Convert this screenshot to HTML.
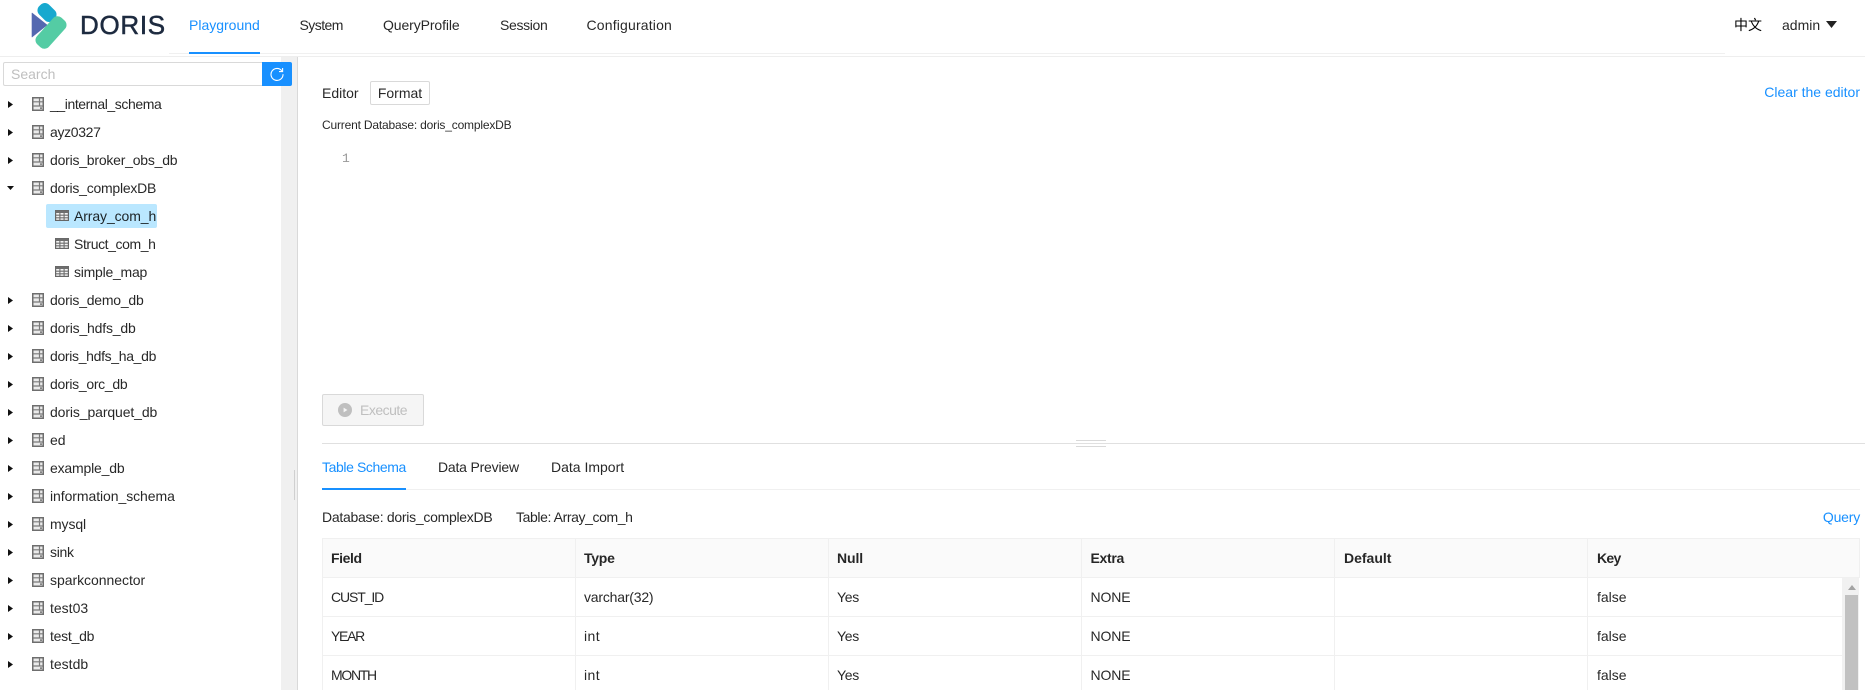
<!DOCTYPE html>
<html lang="en">
<head>
<meta charset="utf-8">
<title>Doris Playground</title>
<style>
html,body{margin:0;padding:0;background:#fff}
body{width:1865px;height:690px;overflow:hidden;position:relative;font-family:"Liberation Sans","Noto Sans CJK SC",sans-serif;font-size:14px;color:rgba(0,0,0,.85)}
.a{position:absolute;white-space:nowrap}
.t{position:absolute;white-space:nowrap;line-height:22px;height:22px}
.blue{color:#1890ff}
.row{position:absolute;left:0;width:281px;height:28px}
.row .car{position:absolute;left:8px;top:11px}
.row .ic{position:absolute;left:32px;top:7px}
.row .ti{position:absolute;left:55px;top:8px}
.row .lb{position:absolute;left:50px;top:3px;line-height:22px;white-space:nowrap;color:rgba(0,0,0,.85)}
.row.c .lb{left:74px}
.hd{position:absolute;top:539px;height:38px;line-height:38px;font-weight:700;color:rgba(0,0,0,.85);white-space:nowrap}
.hl{position:absolute;background:#f0f0f0}
</style>
</head>
<body>
<svg width="0" height="0" style="position:absolute">
  <symbol id="db" viewBox="0 0 12 14">
    <rect x=".75" y=".75" width="10.5" height="12.5" fill="#eaeaea" stroke="#6e6e6e" stroke-width="1.5"/>
    <path d="M1 4.8H11M1 9H11M7.5 1V9" stroke="#7a7a7a" stroke-width="1.2" fill="none"/>
    <rect x="8" y="10.5" width="2" height="1.2" fill="#555"/>
  </symbol>
  <symbol id="tb" viewBox="0 0 14 11">
    <rect x=".6" y=".6" width="12.8" height="9.8" fill="#f4f4f4" stroke="#666" stroke-width="1.2"/>
    <rect x=".6" y=".6" width="12.8" height="2.4" fill="#6e6e6e"/>
    <path d="M1 5.2H13M1 7.8H13M4.9 1V10M9.1 1V10" stroke="#6e6e6e" stroke-width="1.1" fill="none"/>
  </symbol>
  <symbol id="cr" viewBox="0 0 5 7"><path d="M0 0L5 3.5L0 7Z" fill="#111"/></symbol>
  <symbol id="cd" viewBox="0 0 7 4"><path d="M0 0H7L3.5 4Z" fill="#111"/></symbol>
</svg>

<!-- sidebar strip (below the search button) -->
<div class="a" style="left:281px;top:57px;width:16px;height:633px;background:#f0f0f0"></div>
<div class="a" style="left:297px;top:57px;width:1px;height:633px;background:#d9d9d9"></div>
<div class="a" style="left:294px;top:470px;width:1px;height:30px;background:#d0d0d0"></div>

<!-- header -->
<svg class="a" style="left:30px;top:0" width="40" height="52" viewBox="30 0 40 52">
  <rect x="37" y="5.5" width="20" height="14" rx="6" transform="rotate(45 47 12.5)" fill="#17a9cf"/>
  <path d="M32 13L47 25L32 37Z" fill="#5468b0" stroke="#5468b0" stroke-width="0.6" stroke-linejoin="round"/>
  <rect x="33" y="24.5" width="36" height="16" rx="6" transform="rotate(-48 51 32.5)" fill="#54cca4"/>
</svg>
<div class="a" style="left:80px;top:10px;font-size:26px;line-height:30px;color:#1d2a3f;letter-spacing:.7px;-webkit-text-stroke:.5px #1d2a3f">DORIS</div>

<div class="a" style="left:169px;top:53px;width:1556px;height:1px;background:#f0f0f0"></div>
<div class="a" style="left:0;top:56px;width:1865px;height:1px;background:#eee"></div>
<div class="a" style="left:189px;top:52px;width:71px;height:2px;background:#1890ff"></div>

<div class="t blue" style="left:189px;top:14px">Playground</div>
<div class="t" style="left:299.5px;top:14px;letter-spacing:-.55px">System</div>
<div class="t" style="left:383px;top:14px;letter-spacing:-.1px">QueryProfile</div>
<div class="t" style="left:500px;top:14px;letter-spacing:-.34px">Session</div>
<div class="t" style="left:586.5px;top:14px;letter-spacing:.17px">Configuration</div>
<div class="t" style="left:1734px;top:14px;color:#000">中文</div>
<div class="t" style="left:1782px;top:14px">admin</div>
<svg class="a" style="left:1826px;top:21px" width="11" height="7" viewBox="0 0 11 7"><path d="M0 0H11L5.5 7Z" fill="#222"/></svg>

<!-- search -->
<div class="a" style="left:3px;top:62px;width:259px;height:22px;border:1px solid #d9d9d9;border-right:0;border-radius:2px 0 0 2px;background:#fff;color:#bfbfbf;line-height:22px;text-indent:7px">Search</div>
<div class="a" style="left:262px;top:62px;width:30px;height:24px;background:#1890ff;border-radius:0 2px 2px 0"></div>
<svg class="a" style="left:270px;top:67px" width="14" height="14" viewBox="0 0 14 14"><path d="M11.8 3.8A6 6 0 1 0 13 7.2" fill="none" stroke="#fff" stroke-width="1.1"/><path d="M12.6 1V4.6H9" fill="none" stroke="#fff" stroke-width="1.1"/></svg>

<div class="row" style="top:90px"><svg class="car" width="5" height="7"><use href="#cr"/></svg><svg class="ic" width="12" height="14"><use href="#db"/></svg><span class="lb" style="letter-spacing:-.41px">__internal_schema</span></div>
<div class="row" style="top:118px"><svg class="car" width="5" height="7"><use href="#cr"/></svg><svg class="ic" width="12" height="14"><use href="#db"/></svg><span class="lb" style="letter-spacing:-.34px">ayz0327</span></div>
<div class="row" style="top:146px"><svg class="car" width="5" height="7"><use href="#cr"/></svg><svg class="ic" width="12" height="14"><use href="#db"/></svg><span class="lb" style="letter-spacing:-.22px">doris_broker_obs_db</span></div>
<div class="row" style="top:174px"><svg class="car" style="left:7px;top:12px" width="7" height="4"><use href="#cd"/></svg><svg class="ic" width="12" height="14"><use href="#db"/></svg><span class="lb" style="letter-spacing:-.24px">doris_complexDB</span></div>
<div class="a" style="left:46px;top:204px;width:111px;height:24px;background:#bae7ff;border-radius:2px"></div>
<div class="row c" style="top:202px"><svg class="ti" width="14" height="11"><use href="#tb"/></svg><span class="lb" style="letter-spacing:-.1px">Array_com_h</span></div>
<div class="row c" style="top:230px"><svg class="ti" width="14" height="11"><use href="#tb"/></svg><span class="lb" style="letter-spacing:-.4px">Struct_com_h</span></div>
<div class="row c" style="top:258px"><svg class="ti" width="14" height="11"><use href="#tb"/></svg><span class="lb" style="letter-spacing:-.24px">simple_map</span></div>
<div class="row" style="top:286px"><svg class="car" width="5" height="7"><use href="#cr"/></svg><svg class="ic" width="12" height="14"><use href="#db"/></svg><span class="lb" style="letter-spacing:-.23px">doris_demo_db</span></div>
<div class="row" style="top:314px"><svg class="car" width="5" height="7"><use href="#cr"/></svg><svg class="ic" width="12" height="14"><use href="#db"/></svg><span class="lb" style="letter-spacing:-.18px">doris_hdfs_db</span></div>
<div class="row" style="top:342px"><svg class="car" width="5" height="7"><use href="#cr"/></svg><svg class="ic" width="12" height="14"><use href="#db"/></svg><span class="lb" style="letter-spacing:-.33px">doris_hdfs_ha_db</span></div>
<div class="row" style="top:370px"><svg class="car" width="5" height="7"><use href="#cr"/></svg><svg class="ic" width="12" height="14"><use href="#db"/></svg><span class="lb" style="letter-spacing:-.3px">doris_orc_db</span></div>
<div class="row" style="top:398px"><svg class="car" width="5" height="7"><use href="#cr"/></svg><svg class="ic" width="12" height="14"><use href="#db"/></svg><span class="lb" style="letter-spacing:-.11px">doris_parquet_db</span></div>
<div class="row" style="top:426px"><svg class="car" width="5" height="7"><use href="#cr"/></svg><svg class="ic" width="12" height="14"><use href="#db"/></svg><span class="lb">ed</span></div>
<div class="row" style="top:454px"><svg class="car" width="5" height="7"><use href="#cr"/></svg><svg class="ic" width="12" height="14"><use href="#db"/></svg><span class="lb" style="letter-spacing:-.18px">example_db</span></div>
<div class="row" style="top:482px"><svg class="car" width="5" height="7"><use href="#cr"/></svg><svg class="ic" width="12" height="14"><use href="#db"/></svg><span class="lb" style="letter-spacing:-.07px">information_schema</span></div>
<div class="row" style="top:510px"><svg class="car" width="5" height="7"><use href="#cr"/></svg><svg class="ic" width="12" height="14"><use href="#db"/></svg><span class="lb" style="letter-spacing:-.1px">mysql</span></div>
<div class="row" style="top:538px"><svg class="car" width="5" height="7"><use href="#cr"/></svg><svg class="ic" width="12" height="14"><use href="#db"/></svg><span class="lb" style="letter-spacing:-.3px">sink</span></div>
<div class="row" style="top:566px"><svg class="car" width="5" height="7"><use href="#cr"/></svg><svg class="ic" width="12" height="14"><use href="#db"/></svg><span class="lb" style="letter-spacing:-.04px">sparkconnector</span></div>
<div class="row" style="top:594px"><svg class="car" width="5" height="7"><use href="#cr"/></svg><svg class="ic" width="12" height="14"><use href="#db"/></svg><span class="lb">test03</span></div>
<div class="row" style="top:622px"><svg class="car" width="5" height="7"><use href="#cr"/></svg><svg class="ic" width="12" height="14"><use href="#db"/></svg><span class="lb" style="letter-spacing:-.25px">test_db</span></div>
<div class="row" style="top:650px"><svg class="car" width="5" height="7"><use href="#cr"/></svg><svg class="ic" width="12" height="14"><use href="#db"/></svg><span class="lb">testdb</span></div>

<!-- editor -->
<div class="t" style="left:322px;top:82px">Editor</div>
<div class="a" style="left:370px;top:81px;width:58px;height:22px;border:1px solid #d9d9d9;border-radius:2px;line-height:22px;text-align:center">Format</div>
<div class="a" style="left:322px;top:116px;font-size:12px;line-height:18px;letter-spacing:-.18px">Current Database: doris_complexDB</div>
<div class="a" style="left:342px;top:150px;font-size:13px;line-height:18px;color:#999;font-family:'Liberation Mono',monospace">1</div>
<div class="t blue" style="right:5px;top:81px">Clear the editor</div>

<div class="a" style="left:322px;top:394px;width:100px;height:30px;background:#f5f5f5;border:1px solid #d9d9d9;border-radius:2px"></div>
<svg class="a" style="left:338px;top:403px" width="14" height="14" viewBox="0 0 14 14"><circle cx="7" cy="7" r="7" fill="#bfbfbf"/><path d="M5.6 4.6L9.4 7L5.6 9.4Z" fill="#f5f5f5"/></svg>
<div class="t" style="left:360px;top:399px;color:#bfbfbf;letter-spacing:-.5px">Execute</div>

<!-- splitter -->
<div class="a" style="left:322px;top:443px;width:1543px;height:1px;background:#e0e0e0"></div>
<div class="a" style="left:1076px;top:440px;width:30px;height:1px;background:#d9d9d9"></div>
<div class="a" style="left:1076px;top:446px;width:30px;height:1px;background:#d9d9d9"></div>

<!-- tabs -->
<div class="t blue" style="left:322px;top:456px;letter-spacing:-.4px">Table Schema</div>
<div class="t" style="left:438px;top:456px;letter-spacing:-.2px">Data Preview</div>
<div class="t" style="left:551px;top:456px">Data Import</div>
<div class="a" style="left:322px;top:489px;width:1538px;height:1px;background:#f0f0f0"></div>
<div class="a" style="left:322px;top:488px;width:84px;height:2px;background:#1890ff"></div>

<div class="t" style="left:322px;top:506px;letter-spacing:-.28px">Database: doris_complexDB</div>
<div class="t" style="left:516px;top:506px;letter-spacing:-.4px">Table: Array_com_h</div>
<div class="t blue" style="right:5px;top:506px;letter-spacing:-.2px">Query</div>

<!-- table -->
<div class="a" style="left:322px;top:538px;width:1536px;height:38px;background:#fafafa;border:1px solid #f0f0f0"></div>
<div class="hl" style="left:322px;top:538px;width:1px;height:152px"></div>
<div class="hl" style="left:575px;top:538px;width:1px;height:152px"></div>
<div class="hl" style="left:828px;top:538px;width:1px;height:152px"></div>
<div class="hl" style="left:1081px;top:538px;width:1px;height:152px"></div>
<div class="hl" style="left:1334px;top:538px;width:1px;height:152px"></div>
<div class="hl" style="left:1587px;top:538px;width:1px;height:152px"></div>
<div class="hl" style="left:322px;top:616px;width:1520px;height:1px"></div>
<div class="hl" style="left:322px;top:655px;width:1520px;height:1px"></div>

<div class="hd" style="left:331px;letter-spacing:-.4px">Field</div>
<div class="hd" style="left:584px;letter-spacing:-.25px">Type</div>
<div class="hd" style="left:837px;letter-spacing:-.1px">Null</div>
<div class="hd" style="left:1090.5px;letter-spacing:-.3px">Extra</div>
<div class="hd" style="left:1344px">Default</div>
<div class="hd" style="left:1597px;letter-spacing:-.7px">Key</div>

<div class="t" style="left:331px;top:586px;letter-spacing:-1.1px">CUST_ID</div>
<div class="t" style="left:584px;top:586px;letter-spacing:-.2px">varchar(32)</div>
<div class="t" style="left:837px;top:586px;letter-spacing:-.3px">Yes</div>
<div class="t" style="left:1090.5px;top:586px;letter-spacing:-.1px">NONE</div>
<div class="t" style="left:1597px;top:586px">false</div>

<div class="t" style="left:331px;top:625px;letter-spacing:-1.3px">YEAR</div>
<div class="t" style="left:584px;top:625px;letter-spacing:.4px">int</div>
<div class="t" style="left:837px;top:625px;letter-spacing:-.3px">Yes</div>
<div class="t" style="left:1090.5px;top:625px;letter-spacing:-.1px">NONE</div>
<div class="t" style="left:1597px;top:625px">false</div>

<div class="t" style="left:331px;top:664px;letter-spacing:-1.3px">MONTH</div>
<div class="t" style="left:584px;top:664px;letter-spacing:.4px">int</div>
<div class="t" style="left:837px;top:664px;letter-spacing:-.3px">Yes</div>
<div class="t" style="left:1090.5px;top:664px;letter-spacing:-.1px">NONE</div>
<div class="t" style="left:1597px;top:664px">false</div>

<!-- scrollbar -->
<div class="a" style="left:1842px;top:578px;width:17px;height:112px;background:#f1f1f1"></div>
<div class="a" style="left:1845px;top:595px;width:13px;height:95px;background:#c1c1c1"></div>
<svg class="a" style="left:1848px;top:585px" width="8" height="5" viewBox="0 0 8 5"><path d="M0 5L4 0L8 5Z" fill="#a3a3a3"/></svg>
</body>
</html>
